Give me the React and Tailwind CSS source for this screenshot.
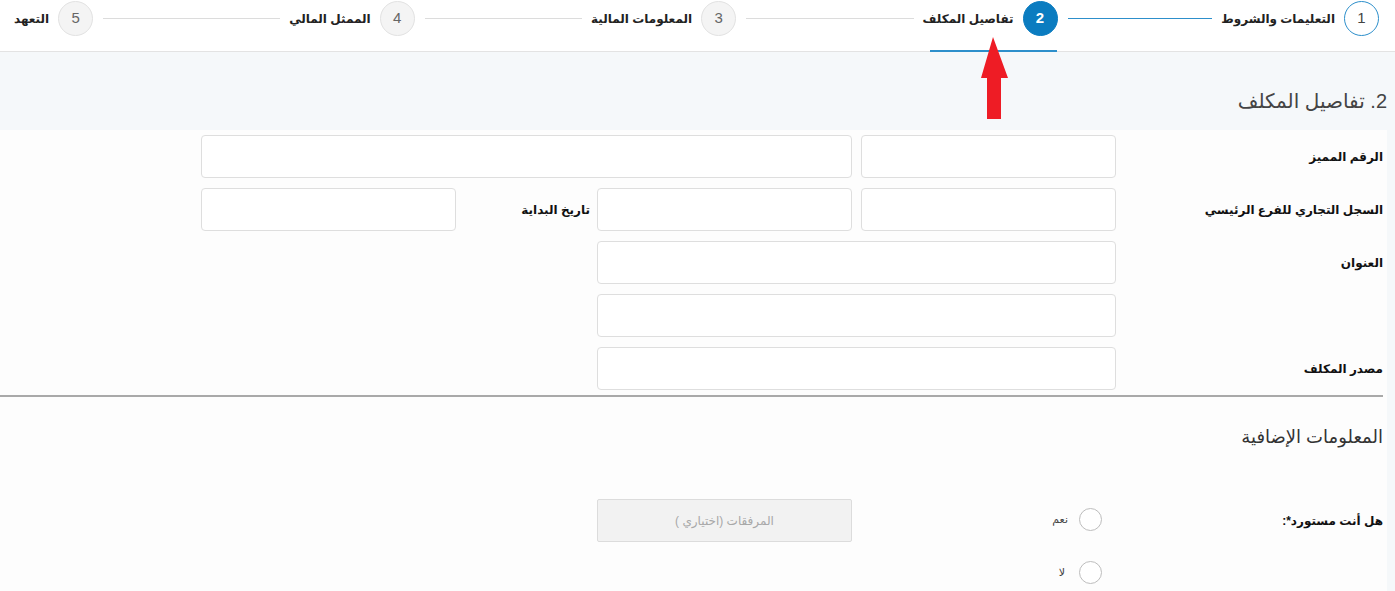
const STEPS = [
  { n: 1, label: 'التعليمات والشروط', state: 'done' },
  { n: 2, label: 'تفاصيل المكلف', state: 'active' },
  { n: 3, label: 'المعلومات المالية', state: 'todo' },
  { n: 4, label: 'الممثل المالي', state: 'todo' },
  { n: 5, label: 'التعهد', state: 'todo' },
];

function Stepper() {
  return (
    <div className="relative h-[52px] bg-white border-b border-[#e3e3e3] flex items-start pr-[16px] pl-[14px]">
      {STEPS.map((s, i) => {
        const last = i === STEPS.length - 1;
        let circle = 'bg-[#f4f4f4] border border-[#e2e2e2] text-[#666]';
        if (s.state === 'active') circle = 'bg-[#0b7cc0] border border-[#0b7cc0] text-white font-bold';
        if (s.state === 'done') circle = 'bg-white border border-[#2d8fcb] text-[#444]';
        return (
          <div key={s.n} className={`relative h-full flex items-start ${last ? 'flex-none' : 'flex-1'}`}>
            <div className={`mt-[1px] w-[35px] h-[35px] rounded-full flex items-center justify-center text-[15px] flex-none ${circle}`}>
              {s.n}
            </div>
            <span className="mr-[9px] mt-[10px] text-[12px] font-bold text-[#222] whitespace-nowrap">{s.label}</span>
            {!last && (
              <div className={`flex-1 mt-[18px] mr-[9px] ml-[10px] h-px ${s.state === 'done' ? 'bg-[#2d8fcb]' : 'bg-[#dcdcdc]'}`} />
            )}
            {s.state === 'active' && (
              <div className="absolute right-[1px] top-[50px] w-[127px] h-[2px] bg-[#2d8fcb]" />
            )}
          </div>
        );
      })}
    </div>
  );
}

function Field({ className = '' }) {
  return <div className={`h-[43px] bg-white border border-[#dedede] rounded-[4px] ${className}`} />;
}

function Label({ children, className = '' }) {
  return (
    <div className={`flex items-center text-[12px] font-bold text-[#111] ${className}`}>{children}</div>
  );
}

export default function App() {
  return (
    <div dir="rtl" className="relative w-[1395px] h-[591px] overflow-hidden bg-[#f5f8fa]" style={{ fontFamily: '"Liberation Sans", "DejaVu Sans", Arial, sans-serif' }}>
      <Stepper />

      <div className="h-[78px] pt-[34px] pr-[8px]">
        <h2 className="text-[20px] text-[#444] font-normal">2. تفاصيل المكلف</h2>
      </div>

      <div className="mr-[8px] bg-[#fdfdfd] h-[461px]">
        <div className="pt-[5px] grid grid-cols-[262px_255px_255px_123px_255px] auto-rows-[43px] gap-x-[9px] gap-y-[10px]">
          <Label className="pr-[4px]">الرقم المميز</Label>
          <Field />
          <Field className="col-span-3" />

          <Label className="pr-[4px]">السجل التجاري للفرع الرئيسي</Label>
          <Field />
          <Field />
          <Label className="-mr-[2px]">تاريخ البداية</Label>
          <Field />

          <Label className="pr-[4px]">العنوان</Label>
          <Field className="col-span-2" />
          <div className="col-span-2" />

          <div />
          <Field className="col-span-2" />
          <div className="col-span-2" />

          <Label className="pr-[4px]">مصدر المكلف</Label>
          <Field className="col-span-2" />
          <div className="col-span-2" />
        </div>

        <div className="mt-[5px] mr-[4px] h-[2px] bg-[#a9a9a9]" />

        <h3 className="mt-[27px] pr-[4px] text-[18px] text-[#333] font-normal">المعلومات الإضافية</h3>

        <div className="mt-[49px] grid grid-cols-[262px_255px_255px] gap-x-[9px]">
          <Label className="pr-[4px] h-[41px]">هل أنت مستورد*:</Label>
          <div className="flex flex-col pr-[14px] gap-[30px] pt-[8px]">
            <label className="flex items-center gap-[11px] text-[11px] text-[#444]">
              <span className="w-[23px] h-[23px] rounded-full border-[1.5px] border-[#bdbdbd] bg-white" />
              نعم
            </label>
            <label className="flex items-center gap-[14px] text-[11px] text-[#444]">
              <span className="w-[23px] h-[23px] rounded-full border-[1.5px] border-[#bdbdbd] bg-white" />
              لا
            </label>
          </div>
          <div className="-mt-[1px] h-[43px] bg-[#f2f2f2] border border-[#dcdcdc] rounded-[2px] flex items-center justify-center text-[12px] text-[#a8a8a8]">
            المرفقات (اختياري )
          </div>
        </div>
      </div>

      <svg className="absolute left-[978px] top-[36px]" width="32" height="84" viewBox="0 0 32 84">
        <polygon points="15,1 3,42 9,42 9,83 23,83 23,42 30,42" fill="#ee1c25" />
      </svg>
    </div>
  );
}
